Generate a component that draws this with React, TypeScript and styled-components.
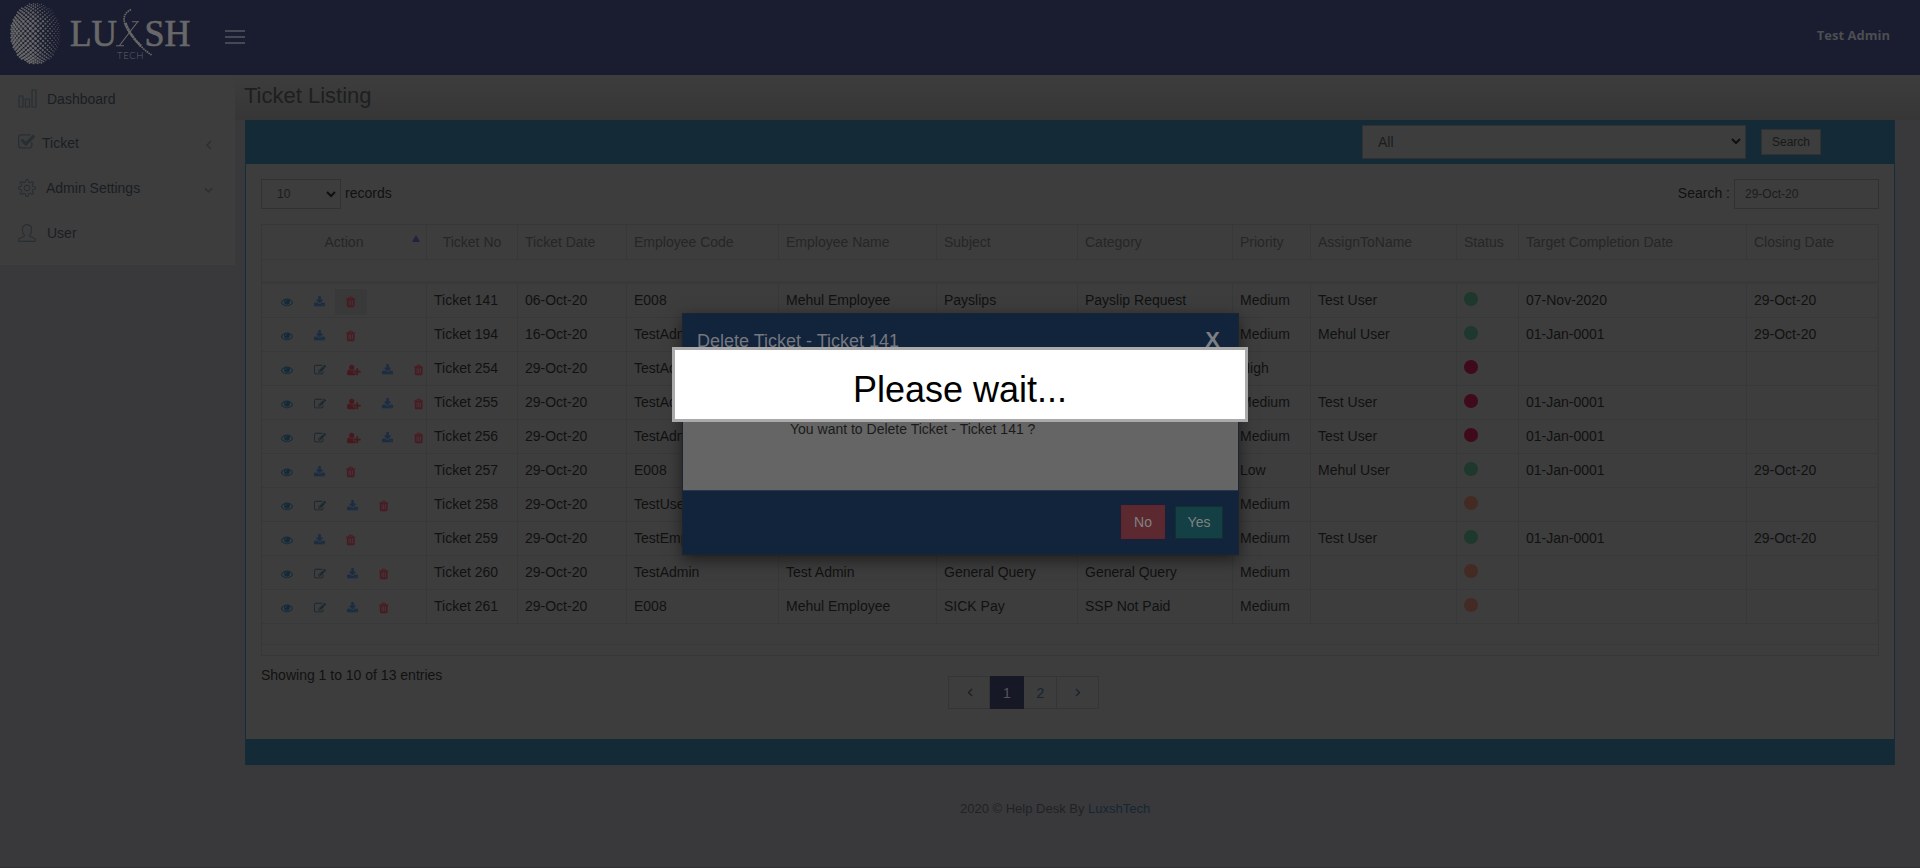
import React from 'react';
import styled, { createGlobalStyle, css } from 'styled-components';
import { SlSettings, SlUser } from 'react-icons/sl';

const GlobalStyle = createGlobalStyle`
  * { box-sizing: border-box; }
  html, body { margin: 0; padding: 0; }
  body {
    background: #39393b;
    color: #111111;
    font: 14px/20px "Liberation Sans", Arial, sans-serif;
    overflow: hidden;
  }
`;

const Page = styled.div`
  height: 868px;
  display: flex;
  flex-direction: column;
  border-bottom: 1px solid #303032;
`;

const TopBar = styled.header`
  height: 75px;
  flex: none;
  display: flex;
  align-items: center;
  background: #1a1d30;
  padding-right: 30px;
`;

const LogoSvg = styled.svg`
  width: 200px;
  height: 75px;
  display: block;
`;

const MenuToggle = styled.div`
  width: 20px;
  height: 14px;
  margin: 0 auto 1px 25px;
  border-top: 2px solid #474855;
  border-bottom: 2px solid #474855;
  padding: 4px 0;
  &::before {
    content: '';
    display: block;
    height: 2px;
    background: #474855;
  }
`;

const UserName = styled.div`
  font: 700 13px/18px "Open Sans", sans-serif;
  color: #4c4e52;
  margin-top: -5px;
`;

const Main = styled.div`
  flex: 1;
  display: flex;
  align-items: flex-start;
`;

const Sidebar = styled.nav`
  width: 235px;
  height: 190px;
  flex: none;
  background: #3d3d3d;
  padding-top: 1px;
`;

const NavItem = styled.div<{ $gap: number }>`
  height: 45px;
  display: flex;
  align-items: center;
  gap: ${(p) => p.$gap}px;
  padding: 0 22px 0 18px;
  color: #191e23;
  & > svg { color: #282f33; flex: none; }
  & + & { padding-bottom: 2px; }
`;

const NavArrow = styled.svg`
  margin-left: auto;
  margin-top: 5px;
`;

const Content = styled.main`
  flex: 1;
  min-width: 0;
`;

const TitleBar = styled.div`
  height: 45px;
  padding: 7px 0 0 9px;
  background: linear-gradient(#3d3d3d, #363636);
`;

const Title = styled.h1`
  margin: 0;
  font-size: 22px;
  line-height: 28px;
  font-weight: 400;
  color: #1d1f20;
`;

const Panel = styled.section`
  width: 1650px;
  height: 645px;
  margin-left: 10px;
  display: flex;
  flex-direction: column;
  background: #3d3d3d;
  border-left: 1px solid #152c39;
  border-right: 1px solid #152c39;
`;

const PanelHead = styled.div`
  height: 44px;
  flex: none;
  display: flex;
  align-items: center;
  justify-content: flex-end;
  gap: 15px;
  padding: 1px 73px 2px 0;
  background: #152a37;
`;

const PanelFoot = styled.div`
  height: 26px;
  flex: none;
  background: #152a37;
`;

const PanelBody = styled.div`
  flex: 1;
  padding: 15px 15px 0;
`;

const field = css`
  display: flex;
  align-items: center;
  border: 1px solid #303132;
  background: #3d3d3d;
  color: #1c1c1c;
`;

const Select = styled.div<{ $w: number; $h: number; $size: number }>`
  ${field}
  width: ${(p) => p.$w}px;
  height: ${(p) => p.$h}px;
  font-size: ${(p) => p.$size}px;
  justify-content: space-between;
  padding: 0 4px 0 15px;
`;

const TextField = styled.div`
  ${field}
  width: 145px;
  height: 30px;
  font-size: 12px;
  padding-left: 10px;
`;

const SearchButton = styled.button`
  width: 60px;
  height: 26px;
  padding: 0;
  margin-top: 1px;
  border: 1px solid #303132;
  background: #3d3d3d;
  color: #181818;
  font: 12px "Liberation Sans", Arial, sans-serif;
`;

const Controls = styled.div`
  height: 30px;
  display: flex;
  align-items: center;
  gap: 4px;
`;

const ControlLabel = styled.span`
  margin-top: -2px;
`;

const Spacer = styled.div`
  flex: 1;
`;

const Table = styled.div`
  margin-top: 15px;
  border: 1px solid #363739;
  width: 1618px;
`;

const Row = styled.div`
  display: grid;
  grid-template-columns: 165px 91px 109px 152px 158px 141px 155px 78px 146px 62px 228px 131px;
  height: 34px;
  border-bottom: 1px solid #373839;
`;

const HeadRow = styled(Row)`
  height: 35px;
  color: #262626;
`;

const FilterRow = styled.div`
  height: 24px;
  border-bottom: 3px solid #38393b;
`;

const FootGap = styled.div`
  height: 21px;
  border-bottom: 1px solid #373839;
`;

const FootRow = styled.div`
  height: 10px;
`;

const Cell = styled.div<{ $center?: boolean }>`
  display: flex;
  align-items: center;
  justify-content: ${(p) => (p.$center ? 'center' : 'flex-start')};
  padding: 0 7px 1px 7px;
  white-space: nowrap;
  border-right: 1px solid #373839;
  position: relative;
  &:last-child { border-right-color: #393a3b; }
`;

const SortMark = styled.span`
  position: absolute;
  right: 6px;
  top: 10px;
  border: 4px solid transparent;
  border-top: 0;
  border-bottom: 7px solid #1f2440;
`;

const ActionCell = styled(Cell)`
  padding: 2px 0 0 8px;
`;

const ActionLink = styled.span<{ $tone: string; $active?: boolean }>`
  height: 26px;
  display: flex;
  align-items: center;
  padding: 0 11px;
  margin-right: -1px;
  color: ${(p) => p.$tone};
  background: ${(p) => (p.$active ? '#393939' : 'transparent')};
  flex: none;
`;

const Dot = styled.span<{ $color: string }>`
  width: 14px;
  height: 14px;
  margin-bottom: 2px;
  border-radius: 50%;
  background: ${(p) => p.$color};
`;

const Below = styled.div`
  margin-top: 9px;
  display: flex;
  align-items: flex-start;
`;

const Showing = styled.div`
  width: 687px;
`;

const Pager = styled.div`
  margin-top: 11px;
  display: flex;
  height: 33px;
  border: 1px solid #343536;
`;

const PageCell = styled.span<{ $w: number; $active?: boolean }>`
  width: ${(p) => p.$w}px;
  display: flex;
  align-items: center;
  justify-content: center;
  padding-left: 1px;
  color: #152430;
  border-right: 1px solid #343536;
  &:last-child { border-right: 0; }
  ${(p) =>
    p.$active &&
    css`
      background: #171825;
      color: #55565b;
      margin: -1px 0;
      border-right-color: #171825;
    `}
`;

const Footer = styled.footer`
  margin-top: 34px;
  padding-left: 725px;
  font-size: 13px;
  color: #1f2224;
`;

const FooterLink = styled.span`
  color: #152635;
`;

const Modal = styled.div`
  position: absolute;
  left: 682px;
  top: 313px;
  width: 557px;
  height: 242px;
  display: flex;
  flex-direction: column;
  border: 1px solid #1b2531;
  background: #656565;
  box-shadow: 0 5px 15px rgba(0, 0, 0, 0.5);
`;

const ModalHead = styled.div`
  height: 56px;
  padding: 14px 18px 0 14px;
  display: flex;
  justify-content: space-between;
  background: #12233c;
  color: #74787e;
  font-size: 18px;
  line-height: 26px;
`;

const Close = styled.span`
  font-size: 22px;
  font-weight: 700;
  line-height: 24px;
  color: #7c7f84;
`;

const ModalBody = styled.div`
  flex: 1;
  padding: 49px 0 0 107px;
  color: #1b1b1b;
`;

const ModalFoot = styled.div`
  height: 64px;
  display: flex;
  align-items: center;
  justify-content: flex-end;
  gap: 10px;
  padding: 0 15px 1px 0;
  background: #12233c;
  border-top: 1px solid #27384c;
`;

const ModalButton = styled.button<{ $w: number; $h: number; $bg: string; $line: string }>`
  width: ${(p) => p.$w}px;
  height: ${(p) => p.$h}px;
  padding: 0;
  border: 1px solid ${(p) => p.$line};
  background: ${(p) => p.$bg};
  color: #7e8282;
  font: 14px "Liberation Sans", Arial, sans-serif;
`;

const WaitBox = styled.div`
  position: absolute;
  left: 672px;
  top: 347px;
  width: 576px;
  height: 75px;
  display: flex;
  align-items: center;
  justify-content: center;
  padding-top: 10px;
  border: 3px solid #aaa;
  background: #fff;
  color: #000;
  font-size: 36px;
  line-height: 40px;
`;

type IconName = 'eye' | 'edit' | 'assign' | 'download' | 'trash';

const icons: Record<IconName, { w: number; box: string; tone: string; d: string }> = {
  eye: {
    w: 12,
    box: '0 0 1792 1792',
    tone: '#132a39',
    d: 'M1664 960q-152-236-381-353 61 104 61 225 0 185-131.5 316.5t-316.5 131.5-316.5-131.5-131.5-316.5q0-121 61-225-229 117-381 353 133 205 333.5 326.5t434.5 121.5 434.5-121.5 333.5-326.5zm-720-384q0-20-14-34t-34-14q-125 0-214.5 89.5t-89.5 214.5q0 20 14 34t34 14 34-14 14-34q0-86 61-147t147-61q20 0 34-14t14-34zm848 384q0 34-20 69-140 230-376.5 368.5t-499.5 138.5-499.5-139-376.5-368q-20-35-20-69t20-69q140-229 376.5-368t499.5-139 499.5 139 376.5 368q20 35 20 69z',
  },
  edit: {
    w: 12,
    box: '0 0 1792 1792',
    tone: '#1a262e',
    d: 'M888 1184l116-116-152-152-116 116v56h96v96h56zm440-720q-16-16-33 1l-350 350q-17 17-1 33t33-1l350-350q17-17 1-33zm80 594v190q0 119-84.5 203.5t-203.5 84.5h-832q-119 0-203.5-84.5t-84.5-203.5v-832q0-119 84.5-203.5t203.5-84.5h832q63 0 117 25 15 7 18 23 3 17-9 29l-49 49q-14 14-32 8-23-6-45-6h-832q-66 0-113 47t-47 113v832q0 66 47 113t113 47h832q66 0 113-47t47-113v-126q0-13 9-22l64-64q15-15 35-7t20 29zm-96-738l288 288-672 672h-288v-288zm444 132l-92 92-288-288 92-92q28-28 68-28t68 28l152 152q28 28 28 68t-28 68z',
  },
  assign: {
    w: 13.7,
    box: '0 0 2048 1792',
    tone: '#47191f',
    d: 'M704 896q-159 0-271.5-112.5t-112.5-271.5 112.5-271.5 271.5-112.5 271.5 112.5 112.5 271.5-112.5 271.5-271.5 112.5zm960 128h352q13 0 22.5 9.5t9.5 22.5v192q0 13-9.5 22.5t-22.5 9.5h-352v352q0 13-9.5 22.5t-22.5 9.5h-192q-13 0-22.5-9.5t-9.5-22.5v-352h-352q-13 0-22.5-9.5t-9.5-22.5v-192q0-13 9.5-22.5t22.5-9.5h352v-352q0-13 9.5-22.5t22.5-9.5h192q13 0 22.5 9.5t9.5 22.5v352zm-736 224q0 52 38 90t90 38h256v238q-68 50-171 50h-874q-121 0-194-69t-73-190q0-53 3.5-103.5t14-109 26.5-108.5 43-97.5 62-81 85.5-53.5 111.5-20q19 0 39 17 79 61 154.500 91.500t164.500 30.500 164.500-30.500 154.500-91.500q20-17 39-17 132 0 217 96h-223q-52 0-90 38t-38 90v192z',
  },
  download: {
    w: 11.14,
    box: '64 0 1664 1792',
    tone: '#1b2d43',
    d: 'M1344 1344q0-26-19-45t-45-19-45 19-19 45 19 45 45 19 45-19 19-45zm256 0q0-26-19-45t-45-19-45 19-19 45 19 45 45 19 45-19 19-45zm128-224v320q0 40-28 68t-68 28h-1472q-40 0-68-28t-28-68v-320q0-40 28-68t68-28h465l135 136q58 56 136 56t136-56l136-136h464q40 0 68 28t28 68zm-325-569q17 41-14 70l-448 448q-18 19-45 19t-45-19l-448-448q-31-29-14-70 17-39 59-39h256v-448q0-26 19-45t45-19h256q26 0 45 19t19 45v448h256q42 0 59 39z',
  },
  trash: {
    w: 9.43,
    box: '192 0 1408 1792',
    tone: '#4a1a22',
    d: 'M704 1376v-704q0-14-9-23t-23-9h-64q-14 0-23 9t-9 23v704q0 14 9 23t23 9h64q14 0 23-9t9-23zm256 0v-704q0-14-9-23t-23-9h-64q-14 0-23 9t-9 23v704q0 14 9 23t23 9h64q14 0 23-9t9-23zm256 0v-704q0-14-9-23t-23-9h-64q-14 0-23 9t-9 23v704q0 14 9 23t23 9h64q14 0 23-9t9-23zm-544-992h448l-48-117q-7-9-17-11h-317q-10 2-17 11zm928 32v64q0 14-9 23t-23 9h-96v948q0 83-47 143.5t-113 60.5h-832q-66 0-113-58.5t-47-141.5v-952h-96q-14 0-23-9t-9-23v-64q0-14 9-23t23-9h309l70-167q15-37 54-63t79-26h320q40 0 79 26t54 63l70 167h309q14 0 23 9t9 23z',
  },
};

const Chevron = () => (
  <svg width="10" height="7" viewBox="0 0 10 7" fill="none" stroke="#101010" strokeWidth="2">
    <path d="M1 1l4 4 4-4" />
  </svg>
);

// Halftone sphere: a checkerboard of dots that tightens towards the rim
// and thins out to the right and the top.
const globeDots = () => {
  const dots: React.ReactElement[] = [];
  const bend = 1.25;
  for (let r = -16; r <= 16; r++) {
    for (let c = -13; c <= 13; c++) {
      if ((r + c) % 2 !== 0) continue;
      const u = c / 12.7;
      const v = r / 15.7;
      const dist = Math.hypot(u, v);
      if (dist > 1) continue;
      const k = dist === 0 ? bend : Math.sin(dist * bend) / dist / Math.sin(bend);
      const x = u * k;
      const y = v * k;
      const fade = Math.max(0, x + 0.1) * 0.55 + Math.max(0, -y - 0.4) * 0.5;
      const size = (1.6 - 0.55 * dist * dist) * (1 - fade);
      if (size < 0.3) continue;
      dots.push(
        <circle key={`${r}:${c}`} cx={35.5 + 25 * x} cy={33.5 + 30.5 * y} r={size} opacity={1 - fade * 0.5} />,
      );
    }
  }
  return dots;
};

const Logo = () => (
  <LogoSvg viewBox="0 0 200 75" fill="#686868">
    <g>{globeDots()}</g>
    <g fontFamily="Liberation Serif, serif" fontSize="37" stroke="#686868" strokeWidth="0.700">
      <text x="70" y="46" textLength="47" lengthAdjust="spacingAndGlyphs">LU</text>
      <text x="144.500" y="46" textLength="46" lengthAdjust="spacingAndGlyphs">SH</text>
    </g>
    <g fill="none" stroke="#686868">
      <path d="M119.500 45.500L137.500 22M116 45.700h8M132 21.700h7" strokeWidth="1.100" />
      <path d="M131 9.500C120 15 124 25 130 33S141 48 151.500 55" strokeWidth="1.700" strokeDasharray="1.600 0.700" />
      <path d="M125.500 23C129 33 135 40 141 46" strokeWidth="2.600" strokeDasharray="2.400 0.500" />
    </g>
    <text x="117" y="59" fontFamily="Lato, sans-serif" fontSize="9.500" fontWeight="300" textLength="26.500" fill="#606068">
      TECH
    </text>
  </LogoSvg>
);

const GREEN = '#1e382e';
const RED = '#3f0a19';
const ORANGE = '#432b24';

const FULL: IconName[] = ['eye', 'edit', 'assign', 'download', 'trash'];
const OPEN: IconName[] = ['eye', 'edit', 'download', 'trash'];
const CLOSED: IconName[] = ['eye', 'download', 'trash'];

interface Ticket {
  actions: IconName[];
  color: string;
  cells: string[];
  target?: string;
  closing?: string;
}

const tickets: Ticket[] = [
  { actions: CLOSED, color: GREEN, cells: ['Ticket 141', '06-Oct-20', 'E008', 'Mehul Employee', 'Payslips', 'Payslip Request', 'Medium', 'Test User'], target: '07-Nov-2020', closing: '29-Oct-20' },
  { actions: CLOSED, color: GREEN, cells: ['Ticket 194', '16-Oct-20', 'TestAdmin', '', '', '', 'Medium', 'Mehul User'], target: '01-Jan-0001', closing: '29-Oct-20' },
  { actions: FULL, color: RED, cells: ['Ticket 254', '29-Oct-20', 'TestAdmin', '', '', '', 'High', ''] },
  { actions: FULL, color: RED, cells: ['Ticket 255', '29-Oct-20', 'TestAdmin', '', '', '', 'Medium', 'Test User'], target: '01-Jan-0001' },
  { actions: FULL, color: RED, cells: ['Ticket 256', '29-Oct-20', 'TestAdmin', '', '', '', 'Medium', 'Test User'], target: '01-Jan-0001' },
  { actions: CLOSED, color: GREEN, cells: ['Ticket 257', '29-Oct-20', 'E008', '', '', '', 'Low', 'Mehul User'], target: '01-Jan-0001', closing: '29-Oct-20' },
  { actions: OPEN, color: ORANGE, cells: ['Ticket 258', '29-Oct-20', 'TestUser', '', '', '', 'Medium', ''] },
  { actions: CLOSED, color: GREEN, cells: ['Ticket 259', '29-Oct-20', 'TestEmp', '', '', '', 'Medium', 'Test User'], target: '01-Jan-0001', closing: '29-Oct-20' },
  { actions: OPEN, color: ORANGE, cells: ['Ticket 260', '29-Oct-20', 'TestAdmin', 'Test Admin', 'General Query', 'General Query', 'Medium', ''] },
  { actions: OPEN, color: ORANGE, cells: ['Ticket 261', '29-Oct-20', 'E008', 'Mehul Employee', 'SICK Pay', 'SSP Not Paid', 'Medium', ''] },
];

const headings = ['Ticket Date', 'Employee Code', 'Employee Name', 'Subject', 'Category', 'Priority', 'AssignToName', 'Status', 'Target Completion Date', 'Closing Date'];

const ActionIcon = ({ name }: { name: IconName }) => {
  const icon = icons[name];
  return (
    <svg width={icon.w} height="12" viewBox={icon.box} fill="currentColor">
      <path d={icon.d} />
    </svg>
  );
};

export default function App() {
  return (
    <>
      <GlobalStyle />
      <Page>
        <TopBar>
          <Logo />
          <MenuToggle />
          <UserName>Test Admin</UserName>
        </TopBar>
        <Main>
          <Sidebar>
            <NavItem $gap={10}>
              <svg width="19" height="19" viewBox="0 0 19 19" fill="none" stroke="currentColor" strokeWidth="1.200">
                <path d="M1 7h4v11H1zM7.500 10h4v8h-4zM14 1h4v17h-4z" />
              </svg>
              Dashboard
            </NavItem>
            <NavItem $gap={7}>
              <svg width="17" height="18" viewBox="64 164 1660 1660" fill="currentColor">
                <path d="M1472 930v318q0 119-84.5 203.5t-203.5 84.5h-832q-119 0-203.5-84.5t-84.5-203.5v-832q0-119 84.5-203.5t203.5-84.5h832q63 0 117 25 15 7 18 23 3 17-9 29l-49 49q-10 10-23 10-3 0-9-2-23-6-45-6h-832q-66 0-113 47t-47 113v832q0 66 47 113t113 47h832q66 0 113-47t47-113v-254q0-13 9-22l64-64q10-10 23-10 6 0 12 3 20 8 20 29zm231-489l-814 814q-24 24-57 24t-57-24l-430-430q-24-24-24-57t24-57l110-110q24-24 57-24t57 24l263 263 647-647q24-24 57-24t57 24l110 110q24 24 24 57t-24 57z" />
              </svg>
              Ticket
              <NavArrow width="8" height="10" viewBox="0 0 8 10" fill="none" stroke="currentColor" strokeWidth="1.400">
                <path d="M6 1L2 5l4 4" />
              </NavArrow>
            </NavItem>
            <NavItem $gap={10}>
              <SlSettings size={18} />
              Admin Settings
              <NavArrow width="9" height="6" viewBox="0 0 10 6" fill="none" stroke="currentColor" strokeWidth="1.400">
                <path d="M1 1l4 4 4-4" />
              </NavArrow>
            </NavItem>
            <NavItem $gap={11}>
              <SlUser size={18} />
              User
            </NavItem>
          </Sidebar>
          <Content>
            <TitleBar>
              <Title>Ticket Listing</Title>
            </TitleBar>
            <Panel>
              <PanelHead>
                <Select $w={384} $h={34} $size={14}>All<Chevron /></Select>
                <SearchButton>Search</SearchButton>
              </PanelHead>
              <PanelBody>
                <Controls>
                  <Select $w={80} $h={30} $size={12}>10<Chevron /></Select>
                  <ControlLabel>records</ControlLabel>
                  <Spacer />
                  <ControlLabel>Search :</ControlLabel>
                  <TextField>29-Oct-20</TextField>
                </Controls>
                <Table>
                  <HeadRow>
                    <Cell $center>Action<SortMark /></Cell>
                    <Cell $center>Ticket No</Cell>
                    {headings.map((h) => <Cell key={h}>{h}</Cell>)}
                  </HeadRow>
                  <FilterRow />
                  {tickets.map((t, row) => (
                    <Row key={t.cells[0]}>
                      <ActionCell>
                        {t.actions.map((name) => (
                          <ActionLink key={name} $tone={icons[name].tone} $active={row === 0 && name === 'trash'}>
                            <ActionIcon name={name} />
                          </ActionLink>
                        ))}
                      </ActionCell>
                      {t.cells.map((text, i) => <Cell key={i}>{text}</Cell>)}
                      <Cell><Dot $color={t.color} /></Cell>
                      <Cell>{t.target}</Cell>
                      <Cell>{t.closing}</Cell>
                    </Row>
                  ))}
                  <FootGap />
                  <FootRow />
                </Table>
                <Below>
                  <Showing>Showing 1 to 10 of 13 entries</Showing>
                  <Pager>
                    <PageCell $w={41}>
                      <svg width="6" height="9" viewBox="0 0 6 9" fill="none" stroke="#1c1d1e" strokeWidth="1.300"><path d="M5 1L1.500 4.500 5 8" /></svg>
                    </PageCell>
                    <PageCell $w={34} $active>1</PageCell>
                    <PageCell $w={33}>2</PageCell>
                    <PageCell $w={41}>
                      <svg width="6" height="9" viewBox="0 0 6 9" fill="none" stroke="#152430" strokeWidth="1.300"><path d="M1 1l3.500 3.500L1 8" /></svg>
                    </PageCell>
                  </Pager>
                </Below>
              </PanelBody>
              <PanelFoot />
            </Panel>
            <Footer>
              2020 © Help Desk By <FooterLink>LuxshTech</FooterLink>
            </Footer>
          </Content>
        </Main>
      </Page>
      <Modal>
        <ModalHead>
          Delete Ticket - Ticket 141
          <Close>X</Close>
        </ModalHead>
        <ModalBody>You want to Delete Ticket - Ticket 141 ?</ModalBody>
        <ModalFoot>
          <ModalButton $w={44} $h={34} $bg="#5d2930" $line="#6a2029">No</ModalButton>
          <ModalButton $w={48} $h={33} $bg="#143f44" $line="#0f3230">Yes</ModalButton>
        </ModalFoot>
      </Modal>
      <WaitBox>Please wait...</WaitBox>
    </>
  );
}
